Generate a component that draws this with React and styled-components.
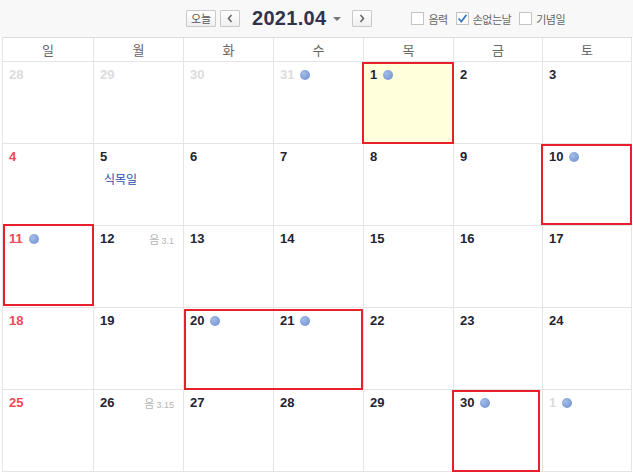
import React from "react";
import styled, { createGlobalStyle } from "styled-components";

const GlobalStyle = createGlobalStyle`
  html, body {
    margin: 0;
    padding: 0;
    background: #fff;
  }
  body {
    font-family: "Liberation Sans", "Noto Sans CJK KR", sans-serif;
  }
`;

const Page = styled.div`
  width: 633px;
  height: 474px;
  overflow: hidden;
  background: #fff;
`;

const Toolbar = styled.div`
  display: flex;
  align-items: center;
  height: 37px;
  padding-left: 186px;
  box-sizing: border-box;
  background: #f8f8f8;
`;

const Button = styled.button`
  display: flex;
  align-items: center;
  justify-content: center;
  box-sizing: border-box;
  height: 17px;
  width: ${p => p.$w}px;
  margin-right: ${p => p.$mr || 0}px;
  padding: 0;
  border: 1px solid #c9c9c9;
  border-radius: 1px;
  background: linear-gradient(#ffffff, #f0f0f0);
  color: #555;
  font-family: "Noto Sans CJK KR", sans-serif;
  font-size: 11px;
  line-height: 1;
`;

const Title = styled.div`
  display: flex;
  align-items: center;
  margin: 0 11px 0 12px;
  font-family: "Liberation Sans", sans-serif;
  font-weight: 700;
  font-size: 20px;
  color: #32334a;
  letter-spacing: 0.3px;
`;

const Caret = styled.span`
  width: 0;
  height: 0;
  margin-left: 7px;
  margin-top: 1px;
  border-left: 4px solid transparent;
  border-right: 4px solid transparent;
  border-top: 4px solid #777;
`;

const Options = styled.div`
  display: flex;
  align-items: center;
  margin-left: 39px;
`;

const Option = styled.label`
  display: flex;
  align-items: center;
  margin-right: 8px;
  font-family: "Noto Sans CJK KR", sans-serif;
  font-size: 11px;
  letter-spacing: -0.5px;
  color: #666;
`;

const Box = styled.span`
  display: flex;
  align-items: center;
  justify-content: center;
  box-sizing: border-box;
  width: 13px;
  height: 13px;
  margin-right: 4px;
  border: 1px solid #c4c4c4;
  background: #fff;
`;

const Grid = styled.div`
  display: grid;
  grid-template-columns: 91px 90px 90px 90px 90px 89px 89px;
  grid-template-rows: 24px repeat(5, 82px);
  margin-left: 2px;
  width: 630px;
  box-sizing: border-box;
  border-top: 1px solid #dddddd;
  border-left: 1px solid #e4e4e4;
`;

const HeadCell = styled.div`
  display: flex;
  align-items: center;
  justify-content: center;
  box-sizing: border-box;
  border-right: 1px solid #e4e4e4;
  border-bottom: 1px solid #e4e4e4;
  font-family: "Noto Sans CJK KR", sans-serif;
  font-size: 13px;
  color: #666;
`;

const Cell = styled.div`
  grid-row: ${p => p.$row};
  grid-column: ${p => p.$col};
  box-sizing: border-box;
  padding: 5px 9px 0 6px;
  border-right: 1px solid #e4e4e4;
  border-bottom: 1px solid #e4e4e4;
  background: ${p => (p.$today ? "#ffffdb" : "#fff")};
`;

const DayLine = styled.div`
  display: flex;
  align-items: center;
  height: 15px;
`;

const Num = styled.span`
  font-weight: 700;
  font-size: 13px;
  color: ${p => p.$color};
`;

const Dot = styled.span`
  width: 10px;
  height: 10px;
  margin-left: 6px;
  border-radius: 50%;
  background: radial-gradient(circle at 35% 35%, #a4bde8, #7c9bd6 70%);
`;

const Lunar = styled.span`
  margin-left: auto;
  color: #b4b4b4;
  font-family: "Noto Sans CJK KR", sans-serif;
  font-size: 11px;

  small {
    margin-left: 2px;
    font-family: "Liberation Sans", sans-serif;
    font-size: 9px;
  }
`;

const Holiday = styled.div`
  margin: 7px 0 0 4px;
  font-family: "Noto Sans CJK KR", sans-serif;
  font-size: 12px;
  line-height: 15px;
  color: #2a4fb4;
`;

const Mark = styled.div`
  grid-row: ${p => p.$row};
  grid-column: ${p => p.$col};
  z-index: 1;
  margin: ${p => p.$m};
  border: 2px solid #e8202a;
  pointer-events: none;
`;

const Chevron = ({ dir }) => (
  <svg width="8" height="9" viewBox="0 0 8 9">
    <path
      d={dir === "left" ? "M5.5 1 L2.5 4.5 L5.5 8" : "M2.5 1 L5.5 4.5 L2.5 8"}
      fill="none"
      stroke="#666"
      strokeWidth="1.6"
    />
  </svg>
);

const Check = () => (
  <svg width="11" height="11" viewBox="0 0 11 11">
    <path d="M1.5 5.5 L4.3 8.5 L9.5 1.8" fill="none" stroke="#3a78c4" strokeWidth="1.8" />
  </svg>
);

const WEEK = ["일", "월", "화", "수", "목", "금", "토"];

const DAYS = [
  { n: 28, out: true }, { n: 29, out: true }, { n: 30, out: true }, { n: 31, out: true, dot: true },
  { n: 1, dot: true, today: true }, { n: 2 }, { n: 3 },
  { n: 4 }, { n: 5, holiday: "식목일" }, { n: 6 }, { n: 7 }, { n: 8 }, { n: 9 }, { n: 10, dot: true },
  { n: 11, dot: true }, { n: 12, lunar: "3.1" }, { n: 13 }, { n: 14 }, { n: 15 }, { n: 16 }, { n: 17 },
  { n: 18 }, { n: 19 }, { n: 20, dot: true }, { n: 21, dot: true }, { n: 22 }, { n: 23 }, { n: 24 },
  { n: 25 }, { n: 26, lunar: "3.15" }, { n: 27 }, { n: 28 }, { n: 29 }, { n: 30, dot: true }, { n: 1, out: true, dot: true },
];

// red annotation boxes, placed on the grid cells they frame
const MARKS = [
  { row: 2, col: 5, m: "0 0 0 -2px" },
  { row: 3, col: 7, m: "0 0 1px -2px" },
  { row: 4, col: 1, m: "-2px 0 2px 0" },
  { row: 5, col: "3 / span 2", m: "1px 1px 0 0" },
  { row: 6, col: 6, m: "0 3px 0 -2px" },
];

const numColor = (d, col) => {
  if (d.out) return "#dcdcdc";
  if (col === 1) return "#f0485a";
  return "#1f2333";
};

const App = () => (
  <Page>
    <GlobalStyle />
    <Toolbar>
      <Button $w={30} $mr={4}>오늘</Button>
      <Button $w={20}><Chevron dir="left" /></Button>
      <Title>
        2021.04
        <Caret />
      </Title>
      <Button $w={20}><Chevron dir="right" /></Button>
      <Options>
        <Option><Box />음력</Option>
        <Option><Box><Check /></Box>손없는날</Option>
        <Option><Box />기념일</Option>
      </Options>
    </Toolbar>
    <Grid>
      {WEEK.map(w => (
        <HeadCell key={w}>{w}</HeadCell>
      ))}
      {DAYS.map((d, i) => {
        const row = Math.floor(i / 7) + 2;
        const col = (i % 7) + 1;
        return (
          <Cell key={i} $row={row} $col={col} $today={d.today}>
            <DayLine>
              <Num $color={numColor(d, col)}>{d.n}</Num>
              {d.dot && <Dot />}
              {d.lunar && (
                <Lunar>
                  음<small>{d.lunar}</small>
                </Lunar>
              )}
            </DayLine>
            {d.holiday && <Holiday>{d.holiday}</Holiday>}
          </Cell>
        );
      })}
      {MARKS.map((m, i) => (
        <Mark key={i} $row={m.row} $col={m.col} $m={m.m} />
      ))}
    </Grid>
  </Page>
);

export default App;
